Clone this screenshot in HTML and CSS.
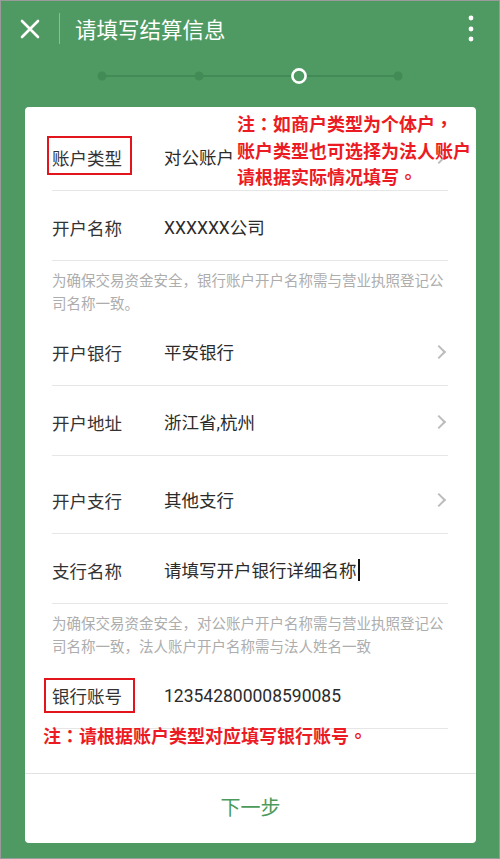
FILE: index.html
```html
<!DOCTYPE html>
<html lang="zh-CN">
<head>
<meta charset="UTF-8">
<title>请填写结算信息</title>
<link rel="stylesheet" href="styles.css">
</head>
<body>
<div class="screen">
    <div class="topbar">
        <svg class="close" width="20" height="20" viewBox="0 0 20 20">
            <path d="M2 2 L18 18 M18 2 L2 18" stroke="#fff" stroke-width="2.6" stroke-linecap="round" fill="none"/>
        </svg>
        <div class="divider"></div>
        <div class="title">请填写结算信息</div>
        <svg class="more" width="8" height="28" viewBox="0 0 8 28">
            <circle cx="4" cy="3" r="2.4" fill="#fff"/>
            <circle cx="4" cy="14" r="2.4" fill="#fff"/>
            <circle cx="4" cy="24" r="2.4" fill="#fff"/>
        </svg>
    </div>
    <div class="steps">
        <svg width="312" height="20" viewBox="0 0 312 20">
            <line x1="8" y1="10" x2="304" y2="10" stroke="#438b56" stroke-width="2"/>
            <circle cx="8" cy="10" r="4.5" fill="#438b56"/>
            <circle cx="105" cy="10" r="4.5" fill="#438b56"/>
            <circle cx="205" cy="10" r="6.6" fill="#4f9a62" stroke="#fff" stroke-width="2.6"/>
            <circle cx="304" cy="10" r="4.5" fill="#438b56"/>
        </svg>
    </div>
    <div class="card">
        <div class="note note-top" lang="zh-TW">注：如商户类型为个体户，<br>账户类型也可选择为法人账户<br>请根据实际情况填写。</div>
        <div class="form">
            <div class="row row-first">
                <div class="label marked">账户类型</div>
                <div class="value">对公账户</div>
                <span class="chevron"></span>
            </div>
            <div class="row">
                <div class="label">开户名称</div>
                <div class="value">XXXXXX公司</div>
            </div>
            <div class="hint">为确保交易资金安全，银行账户开户名称需与营业执照登记公司名称一致。</div>
            <div class="row row-short">
                <div class="label">开户银行</div>
                <div class="value">平安银行</div>
                <span class="chevron"></span>
            </div>
            <div class="row">
                <div class="label">开户地址</div>
                <div class="value">浙江省,杭州</div>
                <span class="chevron"></span>
            </div>
            <div class="row row-tall">
                <div class="label">开户支行</div>
                <div class="value">其他支行</div>
                <span class="chevron"></span>
            </div>
            <div class="row">
                <div class="label">支行名称</div>
                <div class="value">请填写开户银行详细名称<span class="cursor"></span></div>
            </div>
            <div class="hint">为确保交易资金安全，对公账户开户名称需与营业执照登记公司名称一致，法人账户开户名称需与法人姓名一致</div>
            <div class="row row-short">
                <div class="label marked marked-sm">银行账号</div>
                <div class="value">123542800008590085</div>
                <div class="note note-bottom" lang="zh-TW">注：请根据账户类型对应填写银行账号。</div>
            </div>
        </div>
        <div class="next">下一步</div>
    </div>
</div>
</body>
</html>
```

FILE: styles.css
```css
body, html {
    margin: 0;
    padding: 0;
    font-family: "Noto Sans CJK SC", "Noto Sans", sans-serif;
}
.screen {
    width: 500px;
    height: 859px;
    box-sizing: border-box;
    border: 1px solid #9a9a9a;
    background-color: #4f9a62;
    overflow: hidden;
}
.topbar {
    height: 55px;
    display: flex;
    align-items: center;
}
.close {
    margin-left: 19px;
}
.divider {
    width: 1px;
    height: 31px;
    margin-left: 19px;
    background-color: rgba(255,255,255,0.35);
}
.title {
    margin-left: 15px;
    color: #fff;
    font-size: 21.5px;
    flex: 1;
}
.more {
    margin-right: 24px;
}
.steps {
    height: 51px;
    padding-top: 10px;
    box-sizing: border-box;
    display: flex;
    justify-content: center;
}
.card {
    position: relative;
    margin: 0 23px 0 24px;
    background: #fff;
    border-radius: 4px;
}
.form {
    padding-bottom: 44px;
}
.row {
    position: relative;
    height: 70px;
    margin: 0 28px 0 27px;
    padding-bottom: 19px;
    box-sizing: border-box;
    display: flex;
    align-items: flex-end;
    border-bottom: 1px solid #e6e6e6;
    font-size: 17.5px;
    line-height: 26px;
    color: #333;
}
.row-first {
    height: 84px;
}
.row-short {
    height: 66px;
}
.row-tall {
    height: 78px;
}
.label {
    position: relative;
    width: 112px;
}
.value {
    flex: 1;
    color: #2b2b2b;
    font-family: Roboto, "Noto Sans CJK SC", sans-serif;
}
.marked::after {
    content: '';
    position: absolute;
    left: -5px;
    top: -9px;
    width: 85px;
    height: 39px;
    box-sizing: border-box;
    border: 2px solid #e2141c;
}
.marked-sm::after {
    left: -8px;
    top: -5px;
    width: 91px;
    height: 35px;
}
.chevron {
    width: 8px;
    height: 8px;
    margin: 0 4px 9px 0;
    border-top: 2px solid #bcbcbc;
    border-right: 2px solid #bcbcbc;
    transform: rotate(45deg);
}
.cursor {
    display: inline-block;
    width: 2px;
    height: 22px;
    margin-left: 1px;
    background: #111;
    vertical-align: -4px;
}
.hint {
    margin: 0 28px 0 27px;
    padding: 7px 0 6px;
    font-size: 14.5px;
    line-height: 23px;
    color: #adadad;
}
.note {
    position: absolute;
    color: #ec1b23;
    font-family: "Noto Sans CJK TC", "Noto Sans CJK SC", sans-serif;
    font-size: 18px;
    font-weight: bold;
    line-height: 26.5px;
    white-space: nowrap;
    z-index: 2;
}
.note-top {
    left: 212px;
    top: 3px;
}
.note-bottom {
    left: -9px;
    top: 59px;
    line-height: 26px;
}
.next {
    height: 70px;
    border-top: 1px solid #e2e2e2;
    display: flex;
    align-items: center;
    justify-content: center;
    padding-bottom: 4px;
    box-sizing: border-box;
    font-size: 20px;
    color: #4a9a5c;
}
```
